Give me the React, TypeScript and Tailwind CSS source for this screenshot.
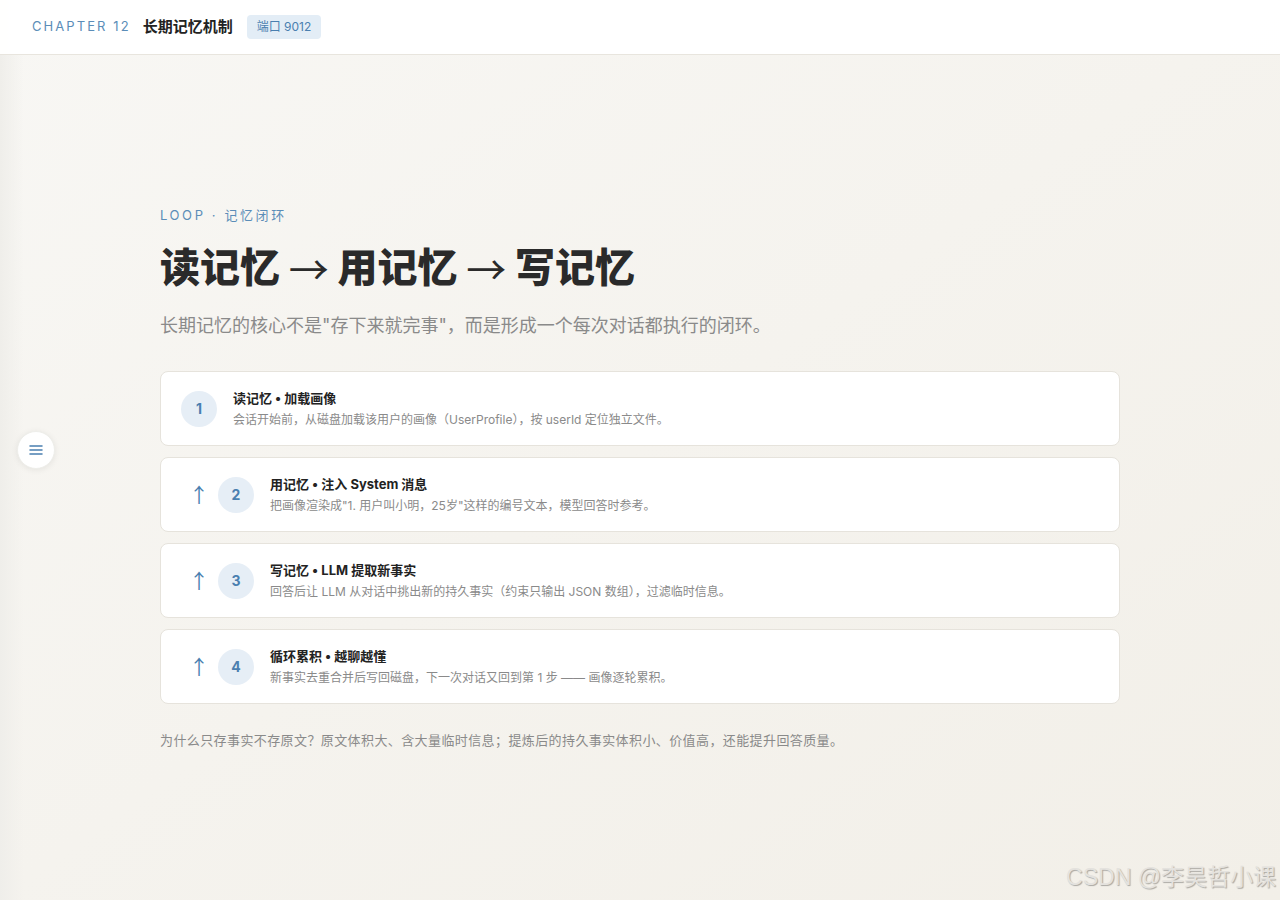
import React from 'react';

const steps = [
  {
    n: 1,
    title: '读记忆 • 加载画像',
    desc: '会话开始前，从磁盘加载该用户的画像（UserProfile），按 userId 定位独立文件。',
  },
  {
    n: 2,
    title: '用记忆 • 注入 System 消息',
    desc: '把画像渲染成"1. 用户叫小明，25岁"这样的编号文本，模型回答时参考。',
  },
  {
    n: 3,
    title: '写记忆 • LLM 提取新事实',
    desc: '回答后让 LLM 从对话中挑出新的持久事实（约束只输出 JSON 数组），过滤临时信息。',
  },
  {
    n: 4,
    title: '循环累积 • 越聊越懂',
    desc: '新事实去重合并后写回磁盘，下一次对话又回到第 1 步 —— 画像逐轮累积。',
  },
];

const font = "font-['Inter','Noto_Sans_CJK_SC',sans-serif]";
const cjk = "font-['Noto_Sans_CJK_SC',sans-serif]";

export default function App() {
  return (
    <div className={`${font} relative min-h-[900px] bg-gradient-to-br from-[#f8f7f4] to-[#f2efe8] text-[#2a2a2a]`}>
      {/* left edge shade */}
      <div className="pointer-events-none absolute left-0 top-0 h-full w-[24px] bg-gradient-to-r from-[#efeeea] to-transparent" />

      {/* Header */}
      <header className="relative flex h-[55px] items-center gap-[12px] border-b border-[#e8e5de] bg-white/95 pl-[32px]">
        <span className="text-[13px] tracking-[0.16em] text-[#5b8db8]">CHAPTER 12</span>
        <span className="text-[15px] font-bold text-[#222]">长期记忆机制</span>
        <span className="ml-[2px] rounded-[4px] bg-[#e3edf6] px-[10px] py-[3px] text-[12px] text-[#4a7fb0]">端口 9012</span>
      </header>

      {/* Menu button */}
      <button className="absolute left-[17px] top-[431px] flex h-[38px] w-[38px] items-center justify-center rounded-full border border-[#eeeeea] bg-white shadow-[0_1px_6px_rgba(0,0,0,0.08)]">
        <svg width="14" height="12" viewBox="0 0 14 12" fill="none">
          <path d="M1 2h12M1 6h12M1 10h12" stroke="#4a7fb0" strokeWidth="1.5" strokeLinecap="round" />
        </svg>
      </button>

      {/* Main */}
      <main className="relative flex min-h-[845px] items-center">
        <div className="ml-[160px] w-[960px]">
          <div className="text-[13px] leading-[20px] tracking-[0.2em] text-[#5b8db8]">LOOP · 记忆闭环</div>
          <h1 className="mt-[19px] flex h-[48px] items-center whitespace-pre text-[40px] font-extrabold leading-[48px] text-[#2a2a2a]">
            <span>读记忆 </span>
            <span className={`${cjk} font-normal leading-[48px]`}>→</span>
            <span> 用记忆 </span>
            <span className={`${cjk} font-normal leading-[48px]`}>→</span>
            <span> 写记忆</span>
          </h1>
          <p className="mt-[20px] text-[18px] leading-[28px] text-[#8a8a8a]">
            长期记忆的核心不是"存下来就完事"，而是形成一个每次对话都执行的闭环。
          </p>

          <div className="mt-[31px] flex flex-col gap-[11px]">
            {steps.map((s, i) => (
              <div
                key={s.n}
                className="flex items-center rounded-[8px] border border-[#e6e3dc] bg-white py-[16px] pl-[20px] pr-[20px]"
              >
                {i > 0 && (
                  <span className={`${cjk} mr-[1px] w-[36px] text-center text-[20px] leading-none text-[#4a7fb0]`}>↑</span>
                )}
                <div className="flex h-[36px] w-[36px] shrink-0 items-center justify-center rounded-full bg-[#e6eef6] text-[14px] font-bold text-[#4a7fb0]">
                  {s.n}
                </div>
                <div className="ml-[16px]">
                  <div className="text-[13px] font-bold leading-[20px] text-[#222]">{s.title}</div>
                  <div className="mt-[3px] text-[12px] leading-[18px] text-[#8a8a8a]">{s.desc}</div>
                </div>
              </div>
            ))}
          </div>

          <p className="mt-[26px] text-[13px] leading-[20px] tracking-[0.4px] text-[#8a8a8a]">
            为什么只存事实不存原文？原文体积大、含大量临时信息；提炼后的持久事实体积小、价值高，还能提升回答质量。
          </p>
        </div>
      </main>

      {/* Watermark */}
      <div className="pointer-events-none absolute bottom-[6px] right-[4px] font-['Liberation_Sans','Noto_Sans_CJK_SC',sans-serif] text-[23px] font-normal text-[#e4e2de] [text-shadow:1px_1px_1px_rgba(0,0,0,0.3)]">
        CSDN @李昊哲小课
      </div>
    </div>
  );
}
